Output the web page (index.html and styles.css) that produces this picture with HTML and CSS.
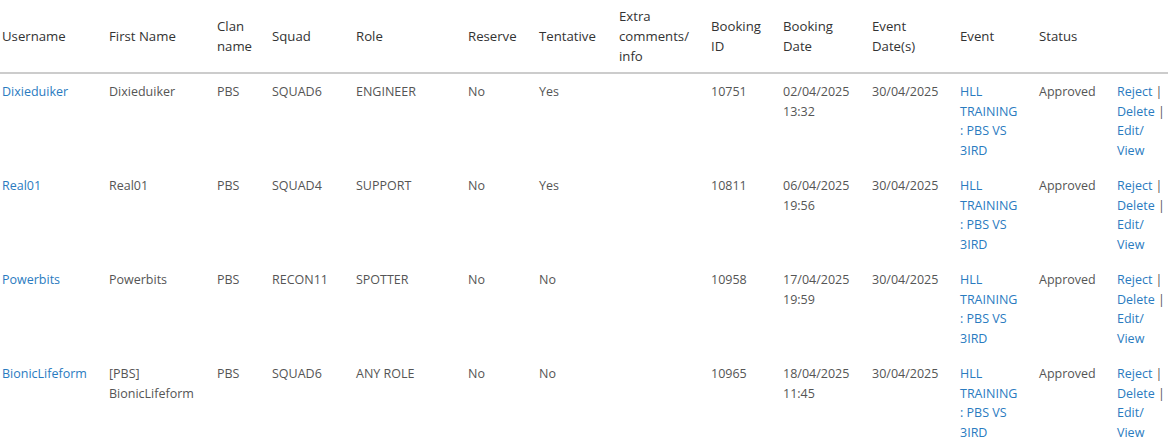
FILE: index.html
```html
<!DOCTYPE html>
<html>
<head>
<meta charset="utf-8">
<link rel="stylesheet" href="styles.css">
</head>
<body>
<table class="bookings">
  <colgroup>
    <col class="c-user"><col class="c-first"><col class="c-clan"><col class="c-squad"><col class="c-role"><col class="c-res"><col class="c-tent"><col class="c-extra"><col class="c-id"><col class="c-bdate"><col class="c-edate"><col class="c-event"><col class="c-status"><col class="c-act">
  </colgroup>
  <thead>
    <tr>
      <th>Username</th><th>First Name</th><th>Clan name</th><th>Squad</th><th>Role</th><th>Reserve</th><th>Tentative</th><th>Extra comments/ info</th><th>Booking ID</th><th>Booking Date</th><th>Event Date(s)</th><th>Event</th><th>Status</th><th></th>
    </tr>
  </thead>
  <tbody>
    <tr>
      <td><a href="#">Dixieduiker</a></td><td>Dixieduiker</td><td>PBS</td><td>SQUAD6</td><td>ENGINEER</td><td>No</td><td>Yes</td><td></td><td>10751</td><td>02/04/2025 13:32</td><td>30/04/2025</td><td><a href="#">HLL TRAINING :&nbsp;PBS VS 3IRD</a></td><td>Approved</td><td class="actions"><a href="#">Reject</a>&nbsp;| <a href="#">Delete</a>&nbsp;| <a href="#">Edit/ View</a></td>
    </tr>
    <tr>
      <td><a href="#">Real01</a></td><td>Real01</td><td>PBS</td><td>SQUAD4</td><td>SUPPORT</td><td>No</td><td>Yes</td><td></td><td>10811</td><td>06/04/2025 19:56</td><td>30/04/2025</td><td><a href="#">HLL TRAINING :&nbsp;PBS VS 3IRD</a></td><td>Approved</td><td class="actions"><a href="#">Reject</a>&nbsp;| <a href="#">Delete</a>&nbsp;| <a href="#">Edit/ View</a></td>
    </tr>
    <tr>
      <td><a href="#">Powerbits</a></td><td>Powerbits</td><td>PBS</td><td>RECON11</td><td>SPOTTER</td><td>No</td><td>No</td><td></td><td>10958</td><td>17/04/2025 19:59</td><td>30/04/2025</td><td><a href="#">HLL TRAINING :&nbsp;PBS VS 3IRD</a></td><td>Approved</td><td class="actions"><a href="#">Reject</a>&nbsp;| <a href="#">Delete</a>&nbsp;| <a href="#">Edit/ View</a></td>
    </tr>
    <tr>
      <td><a href="#">BionicLifeform</a></td><td>[PBS] BionicLifeform</td><td>PBS</td><td>SQUAD6</td><td>ANY ROLE</td><td>No</td><td>No</td><td></td><td>10965</td><td>18/04/2025 11:45</td><td>30/04/2025</td><td><a href="#">HLL TRAINING :&nbsp;PBS VS 3IRD</a></td><td>Approved</td><td class="actions"><a href="#">Reject</a>&nbsp;| <a href="#">Delete</a>&nbsp;| <a href="#">Edit/ View</a></td>
    </tr>
  </tbody>
</table>
</body>
</html>
```
FILE: styles.css
```css
html, body {
  margin: 0;
  padding: 0;
  background: #ffffff;
}
body {
  font-family: "Open Sans", "Noto Sans", sans-serif;
  color: #555555;
}
.bookings {
  border-collapse: collapse;
  table-layout: fixed;
  width: 1168px;
}
.c-user { width: 107px; }
.c-first { width: 108px; }
.c-clan { width: 55px; }
.c-squad { width: 84px; }
.c-role { width: 112px; }
.c-res { width: 71px; }
.c-tent { width: 80px; }
.c-extra { width: 92px; }
.c-id { width: 72px; }
.c-bdate { width: 89px; }
.c-edate { width: 88px; }
.c-event { width: 79px; }
.c-status { width: 78px; }
.c-act { width: 53px; }
.bookings th {
  font-size: 13.2px;
  font-weight: normal;
  line-height: 20px;
  color: #333333;
  text-align: left;
  vertical-align: middle;
  padding: 6px 8px 6px 2px;
  border-bottom: 2px solid #cccccc;
}
.bookings td {
  font-size: 12.5px;
  line-height: 19.5px;
  vertical-align: top;
  text-align: left;
  padding: 8px 6px 8px 2px;
}
.bookings td.actions {
  padding-right: 0;
}
.bookings a {
  color: #2a7bbf;
  text-decoration: none;
}
```
